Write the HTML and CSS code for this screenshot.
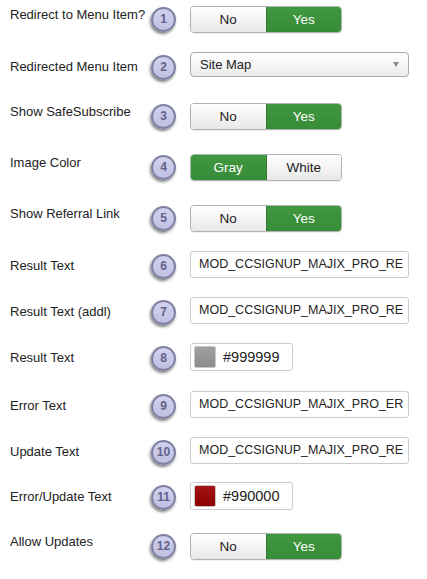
FILE: index.html
```html
<!DOCTYPE html>
<html lang="en">
<head>
    <meta charset="UTF-8">
    <meta name="viewport" content="width=device-width, initial-scale=1.0">
    <title>Module Options</title>
    <link rel="stylesheet" href="styles.css">
</head>
<body>
    <div class="form">
        <div class="row">
            <div class="label">Redirect to Menu Item?</div>
            <div class="badge">1</div>
            <div class="toggle"><span>No</span><span class="on">Yes</span></div>
        </div>
        <div class="row row-field row-lg">
            <div class="label">Redirected Menu Item</div>
            <div class="badge">2</div>
            <div class="select">Site Map<span class="caret"></span></div>
        </div>
        <div class="row row-lg">
            <div class="label">Show SafeSubscribe</div>
            <div class="badge">3</div>
            <div class="toggle"><span>No</span><span class="on">Yes</span></div>
        </div>
        <div class="row row-lg">
            <div class="label">Image Color</div>
            <div class="badge">4</div>
            <div class="toggle"><span class="on">Gray</span><span>White</span></div>
        </div>
        <div class="row">
            <div class="label">Show Referral Link</div>
            <div class="badge">5</div>
            <div class="toggle"><span>No</span><span class="on">Yes</span></div>
        </div>
        <div class="row row-field">
            <div class="label">Result Text</div>
            <div class="badge">6</div>
            <div class="input">MOD_CCSIGNUP_MAJIX_PRO_RE</div>
        </div>
        <div class="row row-field">
            <div class="label">Result Text (addl)</div>
            <div class="badge">7</div>
            <div class="input">MOD_CCSIGNUP_MAJIX_PRO_RE</div>
        </div>
        <div class="row row-field row-md">
            <div class="label">Result Text</div>
            <div class="badge">8</div>
            <div class="color"><span class="swatch gray"></span>#999999</div>
        </div>
        <div class="row row-field">
            <div class="label">Error Text</div>
            <div class="badge">9</div>
            <div class="input">MOD_CCSIGNUP_MAJIX_PRO_ER</div>
        </div>
        <div class="row row-field row-sm">
            <div class="label">Update Text</div>
            <div class="badge">10</div>
            <div class="input">MOD_CCSIGNUP_MAJIX_PRO_RE</div>
        </div>
        <div class="row row-field row-lg">
            <div class="label">Error/Update Text</div>
            <div class="badge">11</div>
            <div class="color"><span class="swatch red"></span>#990000</div>
        </div>
        <div class="row">
            <div class="label">Allow Updates</div>
            <div class="badge">12</div>
            <div class="toggle"><span>No</span><span class="on">Yes</span></div>
        </div>
    </div>
</body>
</html>
```

FILE: styles.css
```css
body {
    margin: 0;
    background: #fff;
    font-family: "Liberation Sans", Arial, sans-serif;
    font-size: 13px;
    color: #222;
}
.form {
    padding-top: 6px;
}
.row {
    display: flex;
    align-items: flex-start;
    height: 46px;
}
.row-lg {
    height: 51px;
}
.row-md {
    height: 48px;
}
.row-sm {
    height: 45px;
}
.label {
    flex: 0 0 151px;
    box-sizing: border-box;
    padding-left: 10px;
    padding-top: 1px;
    line-height: 16px;
    white-space: nowrap;
}
.row-field .label {
    padding-top: 7px;
}
.badge {
    flex: 0 0 25px;
    height: 25px;
    box-sizing: border-box;
    margin: 1px 14px 0 0;
    border: 2px solid #7f7fa2;
    border-radius: 50%;
    background: linear-gradient(#d2d2ee, #bfbfe2);
    box-shadow: -1px 2px 3px rgba(0, 0, 0, 0.5);
    color: #62628a;
    font-size: 12px;
    font-weight: bold;
    line-height: 21px;
    text-align: center;
}
.row-field .badge {
    margin-top: 3px;
}
.toggle {
    display: flex;
    width: 152px;
    height: 27px;
    box-sizing: border-box;
    border: 1px solid #b0b0b0;
    border-radius: 4px;
    overflow: hidden;
    box-shadow: 0 1px 1px rgba(0, 0, 0, 0.06);
}
.toggle span {
    flex: 1;
    display: flex;
    align-items: center;
    justify-content: center;
    background: linear-gradient(#ffffff, #e8e8e8);
    color: #222;
    font-size: 13.5px;
}
.toggle span + span {
    border-left: 1px solid #c4c4c4;
}
.toggle .on {
    background: linear-gradient(#40983f, #378c38);
    color: #fff;
}
.toggle .on + span,
.toggle span + .on {
    border-left-color: #2f7a30;
}
.select {
    position: relative;
    width: 219px;
    height: 25px;
    box-sizing: border-box;
    padding-left: 9px;
    border: 1px solid #aaa;
    border-radius: 4px;
    background: linear-gradient(#ffffff, #ececec);
    line-height: 23px;
    color: #222;
}
.caret {
    position: absolute;
    right: 9px;
    top: 9px;
    border-left: 3.5px solid transparent;
    border-right: 3.5px solid transparent;
    border-top: 5px solid #888;
}
.input {
    width: 219px;
    height: 27px;
    box-sizing: border-box;
    padding: 0 4px 0 8px;
    border: 1px solid #ccc;
    border-radius: 3px;
    font-size: 12.5px;
    line-height: 25px;
    color: #222;
    white-space: nowrap;
    overflow: hidden;
}
.color {
    display: flex;
    align-items: center;
    width: 103px;
    height: 28px;
    box-sizing: border-box;
    padding-left: 3px;
    border: 1px solid #ccc;
    border-radius: 3px;
    font-size: 14.5px;
    color: #222;
}
.swatch {
    width: 20px;
    height: 20px;
    margin-right: 7px;
    border: 1px solid #c8c8c8;
    border-radius: 2px;
}
.swatch.gray {
    background: linear-gradient(#a0a0a0, #8c8c8c);
}
.swatch.red {
    background: linear-gradient(#a41414, #8a0000);
}
```
